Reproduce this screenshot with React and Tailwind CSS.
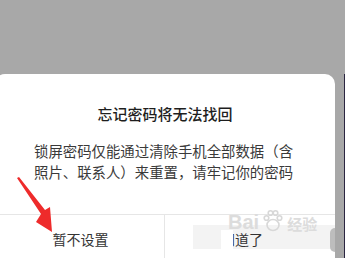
import React from "react";

export default function App() {
  return (
    <div
      className="relative w-[345px] h-[258px] overflow-hidden bg-[#a8a8a8] flex flex-col"
      style={{ fontFamily: '"Noto Sans CJK SC", "Noto Sans", sans-serif' }}
    >
      <div className="h-[74px] shrink-0" />
      <div className="flex flex-1">
        <div className="relative -ml-[5px] w-[340px] shrink-0 rounded-t-[10px] bg-white flex flex-col">
          <div className="pt-[29px] text-center text-[15px] leading-[22px] font-medium text-[#1e1e1e]">
            忘记密码将无法找回
          </div>
          <div className="mt-[15px] pl-[39px] pr-[36px] text-[14.4px] leading-[21px] text-[#3a3a3a]">
            锁屏密码仅能通过清除手机全部数据（含照片、联系人）来重置，请牢记你的密码
          </div>
          <div className="mt-[32px] border-t border-[#e6e6e6] grid grid-cols-2 h-[50px]">
            <div className="flex items-center justify-center pl-[2px] text-[14px] text-[#333] border-r border-[#e6e6e6]">
              暂不设置
            </div>
            <div className="relative flex items-center justify-center pr-[16px] text-[14px] text-[#333]">
              <div className="absolute left-[28px] top-[10px] w-[142px] h-[24px] bg-[#f3f3f3]" />
              <div className="absolute left-[63px] top-[-6px] flex items-end gap-[3px] text-[#dcdcdc]">
                <span className="text-[20px] font-bold leading-none" style={{ fontFamily: '"Liberation Sans", sans-serif' }}>Bai</span>
                <svg width="22" height="23" viewBox="0 0 22 23" fill="none" stroke="#d8d8d8" strokeWidth="1.6">
                  <ellipse cx="11" cy="16" rx="6" ry="5.5" />
                  <circle cx="4.5" cy="9" r="2.3" />
                  <circle cx="8.5" cy="4" r="2.3" />
                  <circle cx="13.5" cy="4" r="2.3" />
                  <circle cx="17.5" cy="9" r="2.3" />
                </svg>
                <span className="text-[15px] leading-none font-bold mb-[1px]">经验</span>
              </div>
              <span className="relative">知道了</span>
              <div className="absolute left-[56px] top-[15px] w-[12px] h-[20px] bg-white" />
            </div>
          </div>
          <div className="absolute right-0 top-[154px] w-[5px] h-[24px] rounded-l-full bg-[#bdbdbd]" />
        </div>
        <div className="flex-1 border-r border-[#2a2540]" />
      </div>
      <svg className="absolute left-0 top-0" width="345" height="258" viewBox="0 0 345 258">
        <polygon points="17,178 19,177 45,210 50,207 52,232 36,222 41,214" fill="#ee2b2b" />
      </svg>
    </div>
  );
}
